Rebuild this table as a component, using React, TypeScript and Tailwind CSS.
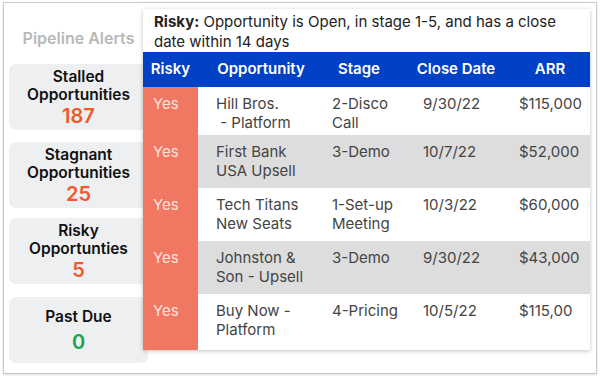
import React from 'react'

const cards = [
  { title: ['Stalled', 'Opportunities'], value: '187', color: 'text-[#f1592a]', h: 'mt-0' },
  { title: ['Stagnant', 'Opportunities'], value: '25', color: 'text-[#f1592a]', h: 'mt-[12px]' },
  { title: ['Risky', 'Opportunties'], value: '5', color: 'text-[#f1592a]', h: 'mt-[10px]' },
  { title: ['Past Due'], value: '0', color: 'text-[#17a34a]', h: 'mt-[13px]' },
]

const rows = [
  { opp: ['Hill Bros.', '\u00a0- Platform'], stage: ['2-Disco', 'Call'], date: '9/30/22', arr: '$115,000', bg: 'bg-white', h: 'h-[48px]' },
  { opp: ['First Bank', 'USA Upsell'], stage: ['3-Demo'], date: '10/7/22', arr: '$52,000', bg: 'bg-[#dddddd]', h: 'h-[53px]' },
  { opp: ['Tech Titans', 'New Seats'], stage: ['1-Set-up', 'Meeting'], date: '10/3/22', arr: '$60,000', bg: 'bg-white', h: 'h-[53px]' },
  { opp: ['Johnston &', 'Son - Upsell'], stage: ['3-Demo'], date: '9/30/22', arr: '$43,000', bg: 'bg-[#dddddd]', h: 'h-[53px]' },
  { opp: ['Buy Now -', 'Platform'], stage: ['4-Pricing'], date: '10/5/22', arr: '$115,00', bg: 'bg-white', h: 'h-[56px]' },
]

const cols = 'grid grid-cols-[55px_126px_70px_124px_1fr]'

export default function App() {
  return (
    <div className="w-[600px] h-[376px] bg-white font-['Inter',sans-serif] pl-[3px] pt-[2px]">
      <div className="w-[594px] h-[372px] border border-[#c9c9c9] shadow-[0_1px_2px_rgba(0,0,0,0.15)] flex pl-[5px]">
        {/* sidebar */}
        <div className="w-[139px] flex flex-col">
          <div className="mt-[25px] h-[20px] text-center text-[16px] font-semibold leading-[20px] text-[#b8b8b8]">
            Pipeline Alerts
          </div>
          <div className="mt-[16px] flex flex-col">
            {cards.map((c) => (
              <div key={c.value} className={`${c.h} h-[66px] rounded-[7px] bg-[#eeeff1] flex flex-col items-center justify-center`}>
                {c.title.map((t) => (
                  <div key={t} className="text-[15.5px] font-semibold leading-[18px] text-[#111]">{t}</div>
                ))}
                <div className={`${c.color} text-[20px] font-semibold leading-[22px] ${c.title.length === 1 ? 'mt-[5px]' : 'mt-[1px]'}`}>{c.value}</div>
              </div>
            ))}
          </div>
        </div>

        {/* table panel */}
        <div className="relative z-10 ml-[-5px] mt-[6px] w-[447px] h-[341px] bg-white shadow-[0_1px_4px_rgba(0,0,0,0.25)] flex flex-col">
          <p className="h-[43px] pl-[11px] pt-[3px] text-[15px] leading-[20px] text-[#222]">
            <b className="font-bold">Risky:</b> Opportunity is Open, in stage 1-5, and has a close date within 14 days
          </p>
          <div className={`${cols} h-[36px] bg-[#0141c6] text-white text-[15px] font-semibold items-center`}>
            <div className="text-center">Risky</div>
            <div className="text-center">Opportunity</div>
            <div className="text-center">Stage</div>
            <div className="text-center">Close Date</div>
            <div className="text-center pr-[8px]">ARR</div>
          </div>
          <div className="flex flex-col text-[15px] leading-[19px] text-[#444]">
            {rows.map((r, i) => (
              <div key={i} className={`${cols} ${r.h} ${r.bg}`}>
                <div className="bg-[#f07762] text-[#fde3dc] pl-[10px] pt-[7px]">Yes</div>
                <div className="pl-[18px] pt-[7px]">
                  {r.opp.map((l) => <div key={l}>{l}</div>)}
                </div>
                <div className="pl-[8px] pt-[7px] whitespace-nowrap">
                  {r.stage.map((l) => <div key={l}>{l}</div>)}
                </div>
                <div className="pl-[29px] pt-[7px]">{r.date}</div>
                <div className="pt-[7px] pl-[1px]">{r.arr}</div>
              </div>
            ))}
          </div>
        </div>
      </div>
    </div>
  )
}
